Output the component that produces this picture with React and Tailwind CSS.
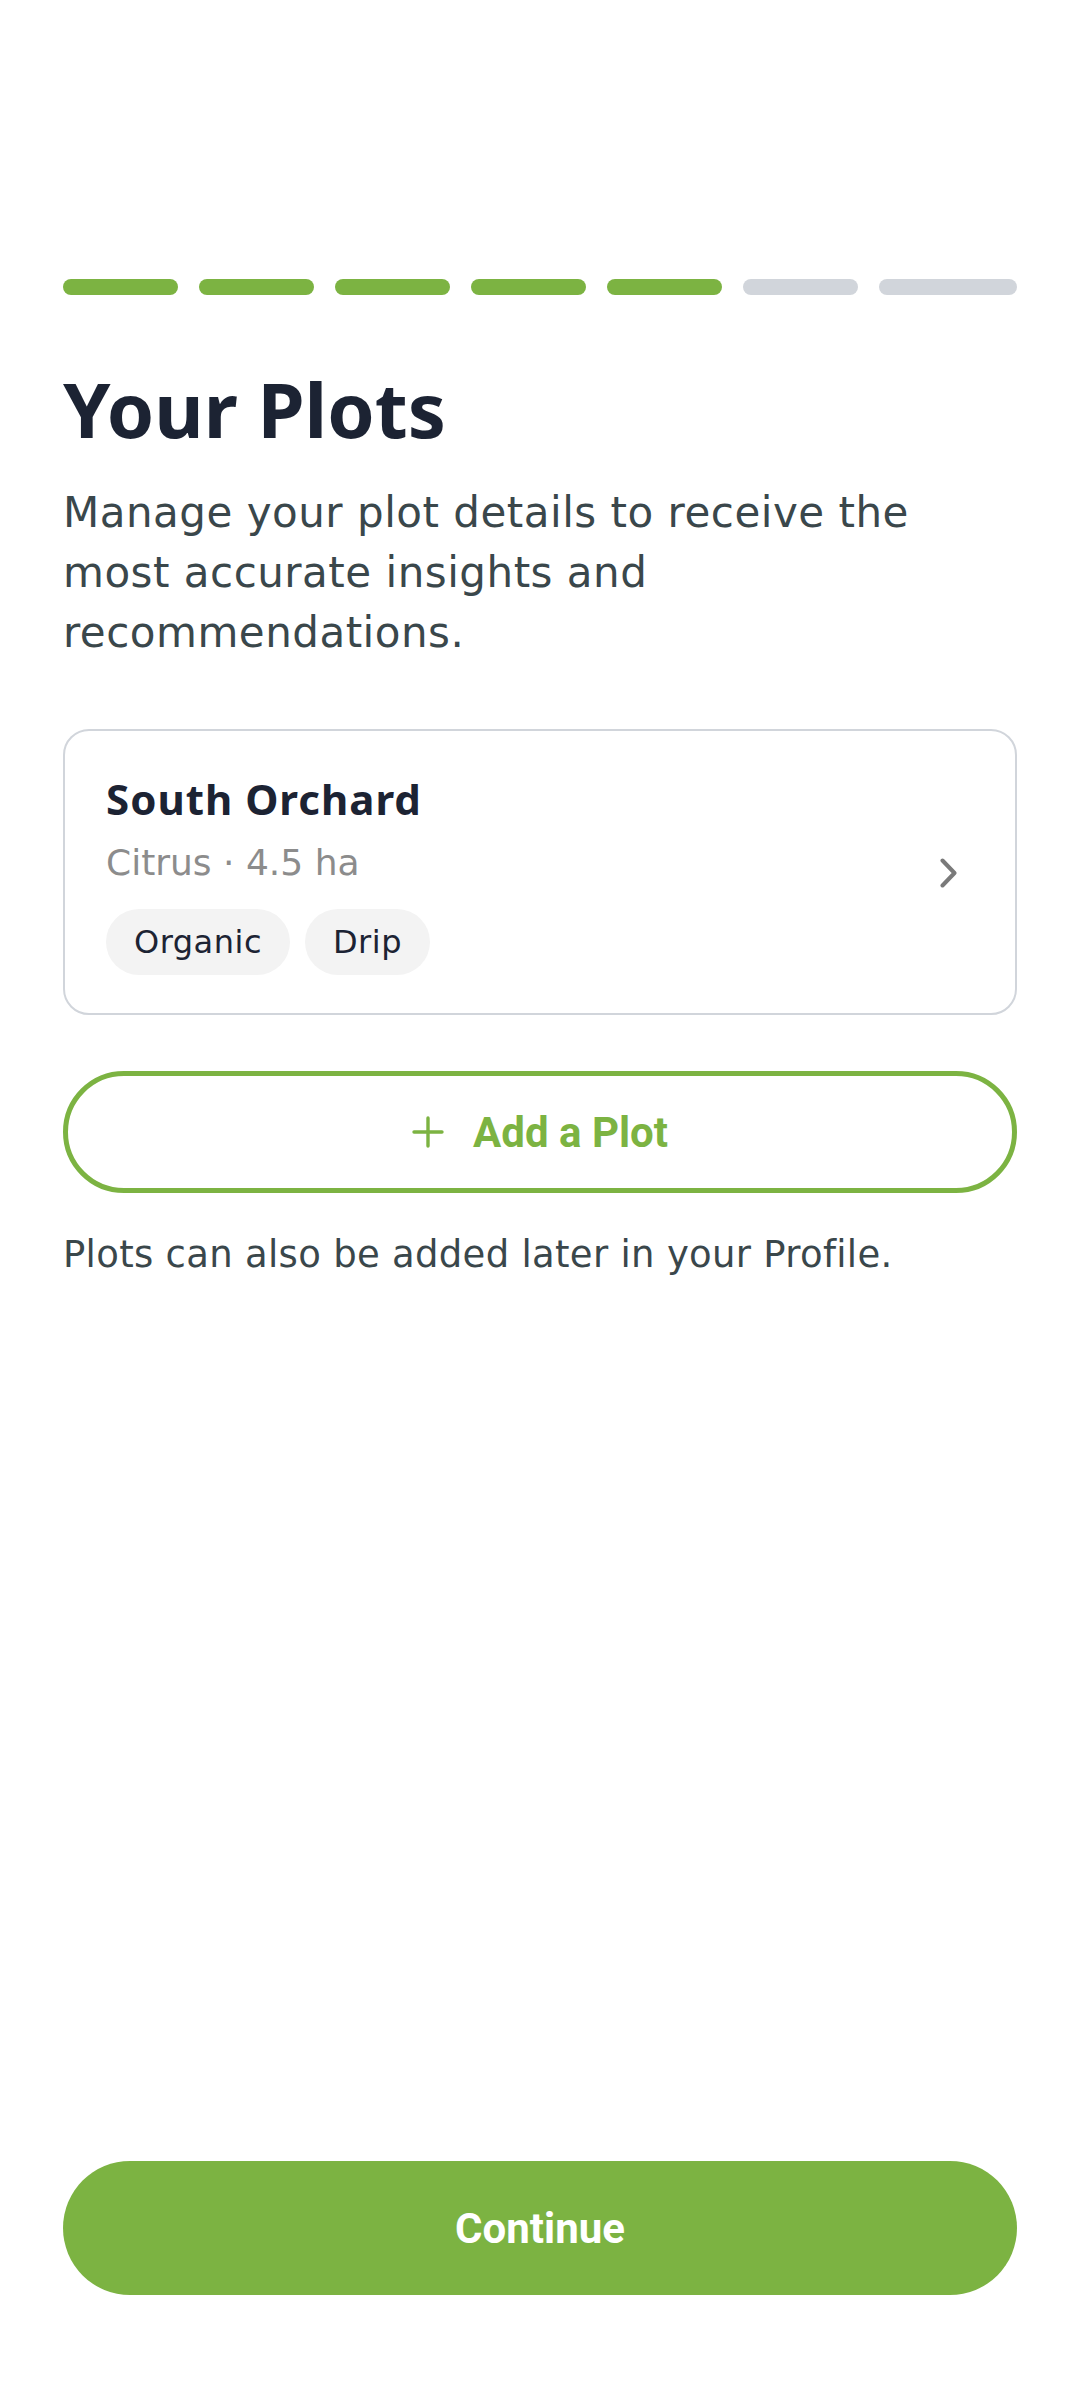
import React from 'react';

const GREEN = 'bg-[#7cb342]';

const steps = [true, true, true, true, true, false, false];

const PlotCard = ({ name, meta, tags }) => (
  <div className="mt-[66px] flex items-center rounded-[26px] border-[2px] border-[#d1d5db] pl-[41px] pr-[58px] pt-[40px] pb-[38px]">
    <div className="flex-1">
      <div className="font-['Noto_Sans',sans-serif] text-[42px] leading-[56px] font-bold tracking-[1px] text-[#1c2333]">
        {name}
      </div>
      <div className="mt-[12px] font-['DejaVu_Sans',sans-serif] text-[36px] leading-[48px] text-[#8c8c8c]">
        {meta}
      </div>
      <div className="mt-[22px] flex gap-[15px]">
        {tags.map((t) => (
          <span
            key={t}
            className="flex h-[66px] items-center rounded-full bg-[#f3f3f3] px-[28px] font-['DejaVu_Sans',sans-serif] text-[32px] tracking-[0.5px] text-[#1c2333]"
          >
            {t}
          </span>
        ))}
      </div>
    </div>
    <svg width="17" height="30" viewBox="0 0 17 30" fill="none">
      <path d="M2.5 2.5 L14.5 15 L2.5 27.5" stroke="#7a7a7a" strokeWidth="4" strokeLinecap="round" strokeLinejoin="round" />
    </svg>
  </div>
);

const App = () => {
  return (
    <div className="flex h-[2400px] flex-col bg-white px-[63px]">
      {/* progress */}
      <div className="mt-[279px] flex gap-[21px]">
        {steps.map((done, i) => (
          <div
            key={i}
            className={`h-[16px] rounded-full ${i === steps.length - 1 ? 'flex-1' : 'w-[115px]'} ${done ? GREEN : 'bg-[#d1d5db]'}`}
          />
        ))}
      </div>

      <h1 className="mt-[68px] font-['Noto_Sans',sans-serif] text-[76px] leading-[92px] font-bold text-[#1c2333]">
        Your Plots
      </h1>
      <p className="mt-[28px] font-['DejaVu_Sans',sans-serif] text-[42px] leading-[60px] tracking-[0.5px] text-[#3a474b]">
        Manage your plot details to receive the most accurate insights and recommendations.
      </p>

      <PlotCard name="South Orchard" meta="Citrus · 4.5 ha" tags={['Organic', 'Drip']} />

      <button className="mt-[56px] flex h-[122px] items-center justify-center gap-[29px] rounded-full border-[5px] border-[#7cb342] bg-white">
        <svg width="32" height="32" viewBox="0 0 32 32" fill="none">
          <path d="M16 2 V30 M2 16 H30" stroke="#7cb342" strokeWidth="3.4" strokeLinecap="round" />
        </svg>
        <span className="font-['Roboto',sans-serif] text-[42px] font-bold text-[#7cb342]">Add a Plot</span>
      </button>

      <p className="mt-[36px] font-['DejaVu_Sans',sans-serif] text-[37px] leading-[52px] tracking-[0.3px] text-[#3a474b]">
        Plots can also be added later in your Profile.
      </p>

      <div className="flex-1" />

      <button className={`mb-[105px] flex h-[134px] items-center justify-center rounded-full ${GREEN}`}>
        <span className="font-['Roboto',sans-serif] text-[42px] font-bold text-white">Continue</span>
      </button>
    </div>
  );
};

export default App;
